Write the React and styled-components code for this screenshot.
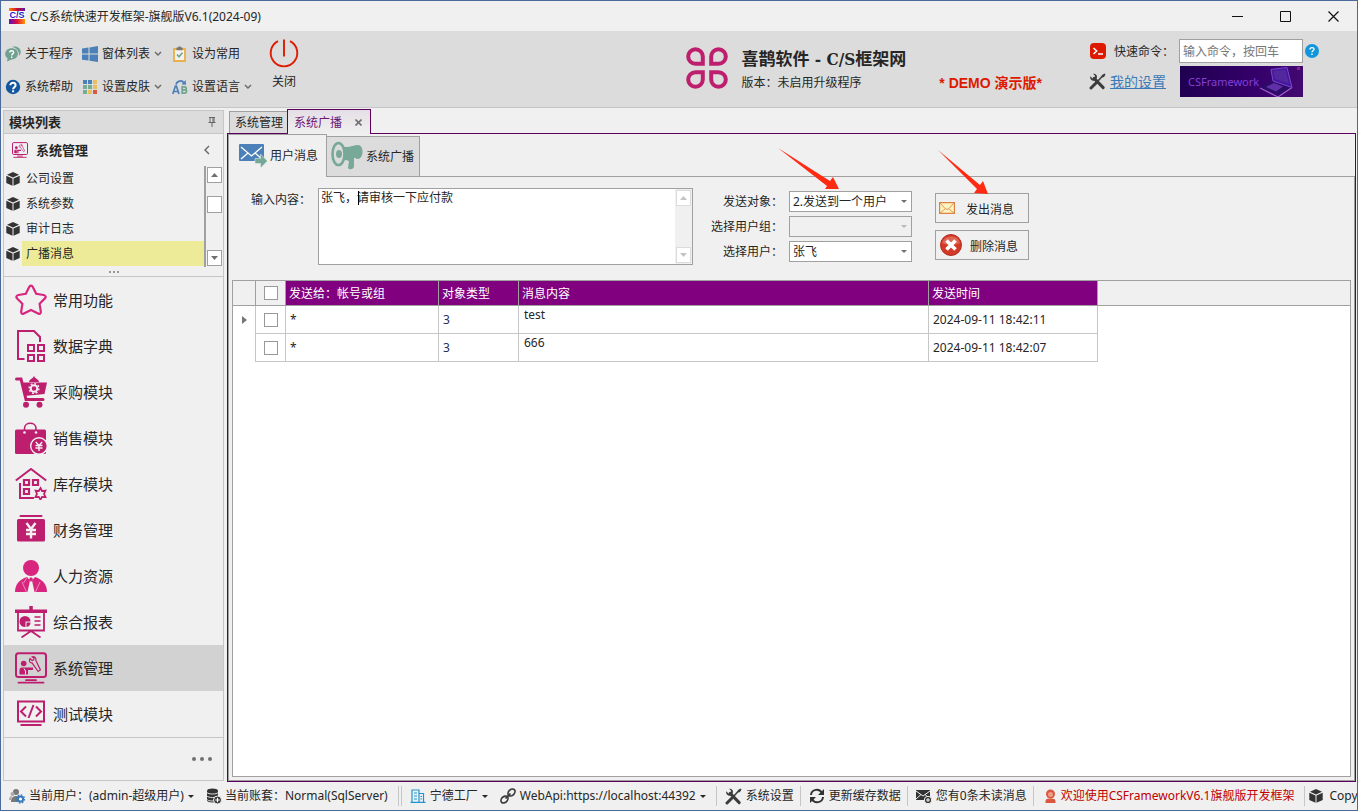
import React, { useState } from "react";
import styled, { createGlobalStyle, css } from "styled-components";

const ink = "#262626";
const pink = "#be1e6e";
const line = "#c6c6c6";
const edge = "#a0a0a0";
const purple = "#5c005c";
const uiFont = `"Noto Sans", "Noto Sans CJK SC", sans-serif`;

const GlobalStyle = createGlobalStyle`
  * { box-sizing: border-box; }
  body { margin: 0; background: #f0f0f0; color: ${ink}; font: 12px/16px ${uiFont}; }
  button, input, select, textarea { font: inherit; color: inherit; margin: 0; }
  button { padding: 0; border: 0; background: none; text-align: left; }
  svg { display: block; flex: none; }
`;

/* ---------- window frame ---------- */
const Window = styled.div`
  display: flex;
  flex-direction: column;
  min-height: 100vh;
  border: 1px solid #4a6a9c;
  background: #f0f0f0;
  overflow: hidden;
  white-space: nowrap;
`;
const TitleBar = styled.header`
  display: flex;
  align-items: center;
  height: 30px;
  padding-left: 8px;
  background: #f0f0f0;
`;
const TitleText = styled.h1`
  flex: 1;
  margin: 0 0 0 5px;
  padding-top: 2px;
  font-size: 12px;
  font-weight: 400;
`;
const WindowButton = styled.button`
  display: grid;
  place-items: center;
  width: 48px;
  height: 30px;
`;

/* ---------- toolbar ---------- */
const Toolbar = styled.div`
  display: flex;
  align-items: flex-start;
  height: 77px;
  padding: 6px 38px 0 4px;
  background: #dcdcdc;
  border-bottom: 1px solid ${line};
`;
const CommandGrid = styled.div`
  display: grid;
  grid-template-columns: 77px 90px 84px;
  grid-auto-rows: 33px;
`;
const Command = styled.button`
  display: flex;
  align-items: center;
  gap: 4px;
  height: 33px;
`;
const CloseCommand = styled.button`
  display: flex;
  flex-direction: column;
  align-items: center;
  gap: 5px;
  width: 56px;
`;
const Spacer = styled.div`
  flex: 1;
`;
const Brand = styled.div`
  display: flex;
  gap: 14px;
  padding-top: 10px;
`;
const BrandName = styled.div`
  font: bold 17px/24px "DejaVu Serif Condensed", "Noto Sans CJK SC", serif;
`;
const BrandVersion = styled.div`
  margin-top: 4px;
`;
const DemoMark = styled.strong`
  margin: 36px 47px 0 33px;
  color: #dd1a00;
  font: bold 14px/20px "Liberation Sans", "Noto Sans CJK SC", sans-serif;
`;
const QuickArea = styled.div`
  display: grid;
  grid-template-columns: 90px 124px 16px;
  grid-template-rows: 24px 31px;
  row-gap: 3px;
  padding-top: 2px;
  align-items: center;
`;
const QuickLabel = styled.label`
  display: flex;
  align-items: center;
  gap: 8px;
  padding-left: 1px;
`;
const QuickText = styled.span`
  padding-top: 2px;
`;
const SettingsCell = styled.div`
  display: flex;
  align-items: center;
  gap: 4px;
`;
const SettingsLink = styled.a`
  color: #3a7ab8;
  font-size: 14px;
  line-height: 20px;
`;
const QuickInput = styled.input`
  width: 100%;
  height: 24px;
  padding: 0 3px;
  border: 1px solid ${edge};
  background: #fff;
  &::placeholder { color: #777; opacity: 1; }
`;
const Banner = styled.div`
  display: flex;
  align-items: center;
  justify-content: space-between;
  height: 31px;
  margin-left: 1px;
  padding-left: 8px;
  overflow: hidden;
  background: linear-gradient(100deg, #1f0050, #35006a 60%, #430a70);
  color: #843fd8;
  font-size: 11px;
`;

/* ---------- sidebar ---------- */
const Body = styled.div`
  display: flex;
  flex: 1;
  padding-right: 1px;
`;
const Sidebar = styled.nav`
  display: flex;
  flex-direction: column;
  width: 221px;
  margin: 2px 3px 1px 2px;
  border: 1px solid ${line};
`;
const SidebarTitle = styled.div`
  display: flex;
  align-items: center;
  justify-content: space-between;
  height: 23px;
  padding: 0 7px 0 5px;
  border-bottom: 1px solid ${line};
  background: #dcdcdc;
  font-size: 13px;
  font-weight: 700;
`;
const GroupTitle = styled.div`
  display: flex;
  align-items: center;
  gap: 8px;
  height: 32px;
  padding: 0 13px 0 8px;
  font-size: 13px;
  font-weight: 700;
`;
const SubList = styled.div`
  display: flex;
  height: 101px;
`;
const SubItems = styled.div`
  flex: 1;
  border-right: 2px solid ${edge};
`;
const SubItem = styled.button`
  display: flex;
  align-items: center;
  gap: 2px;
  width: 100%;
  height: 25px;
  padding-left: 2px;
`;
const SubItemText = styled.span`
  flex: 1;
  padding: 1px 0 0 4px;
  line-height: 24px;
  background: ${(p) => (p.$on ? "#eeeb98" : "transparent")};
`;
const Scroller = styled.div`
  display: flex;
  flex-direction: column;
  justify-content: space-between;
  padding: 1px;
`;
const ScrollBox = styled.button`
  display: grid;
  place-items: center;
  width: 15px;
  height: 16px;
  border: 1px solid ${(p) => (p.$faint ? "#dcdcdc" : edge)};
  background: #fff;
  color: ${(p) => (p.$faint ? "#c4c4c4" : "#707070")};
`;
const ScrollThumb = styled.div`
  width: 15px;
  height: 17px;
  margin-bottom: 24px;
  border: 1px solid ${edge};
  background: #fff;
`;
const Grip = styled.div`
  display: grid;
  place-items: center;
  height: 10px;
  border-bottom: 1px solid ${line};
`;
const NavItem = styled.button`
  display: flex;
  align-items: center;
  gap: 6px;
  height: 46px;
  padding-left: 11px;
  background: ${(p) => (p.$on ? "#d2d2d2" : "transparent")};
  font-size: 15px;
  line-height: 20px;
`;
const NavText = styled.span`
  padding-bottom: 1px;
`;
const SidebarFoot = styled.div`
  display: flex;
  flex: 1;
  align-items: center;
  justify-content: flex-end;
  padding-right: 11px;
  border-top: 1px solid ${line};
`;

/* ---------- documents ---------- */
const Documents = styled.main`
  display: flex;
  flex: 1;
  flex-direction: column;
  min-width: 0;
`;
const DocTabs = styled.div`
  display: flex;
  align-items: flex-end;
  height: 25px;
  padding-left: 2px;
`;
const DocTab = styled.button`
  display: flex;
  align-items: center;
  height: 22px;
  padding: 1px 4px 0 5px;
  border: 1px solid ${edge};
  border-width: 1px 0 0 1px;
  background: #dcdcdc;
  ${(p) =>
    p.$on &&
    css`
      gap: 13px;
      position: relative;
      z-index: 1;
      height: 25px;
      margin-bottom: -1px;
      padding: 1px 8px 0 6px;
      border: 1px solid ${purple};
      border-bottom: 0;
      background: linear-gradient(#e4dfe6, #f0f0f0);
      color: #6d1573;
    `}
`;
const DocFrame = styled.section`
  display: flex;
  flex: 1;
  flex-direction: column;
  border: 1px solid ${purple};
`;
const PageTabs = styled.div`
  display: flex;
  height: 43px;
`;
const PageTab = styled.button`
  display: flex;
  align-items: center;
  gap: 3px;
  margin-top: 2px;
  padding: 0 5px 0 4px;
  border: 1px solid ${edge};
  border-left: 0;
  background: #dcdcdc;
  ${(p) =>
    p.$on &&
    css`
      margin-top: 0;
      padding: 0 8px 0 10px;
      border-left: 1px solid ${edge};
      border-bottom: 0;
      background: #f0f0f0;
    `}
`;
const PageTabsRest = styled.div`
  flex: 1;
  border-bottom: 1px solid ${edge};
`;
const Page = styled.div`
  display: flex;
  flex: 1;
  flex-direction: column;
  padding: 0 3px 3px;
  border: 1px solid ${edge};
  border-top: 0;
`;

/* ---------- message form ---------- */
const Form = styled.form`
  display: flex;
  align-items: flex-start;
  height: 103px;
  padding: 11px 0 0 19px;
`;
const MessageLabel = styled.label`
  width: 67px;
  padding-top: 4px;
`;
const MessageBox = styled.div`
  position: relative;
  display: flex;
  width: 375px;
  height: 77px;
  border: 1px solid ${edge};
  background: #fff;
`;
const MessageText = styled.textarea`
  flex: 1;
  padding: 1px 2px;
  border: 0;
  outline: 0;
  resize: none;
  overflow: hidden;
  background: transparent;
`;
const TextCaret = styled.i`
  position: absolute;
  top: 2px;
  left: 39px;
  width: 1px;
  height: 14px;
  background: #000;
`;
const BoxScroller = styled(Scroller)`
  background: #f0f0f0;
`;
const Targets = styled.div`
  position: relative;
  display: grid;
  grid-template-columns: 72px 123px;
  grid-auto-rows: 21px;
  gap: 4px 6px;
  align-items: center;
  margin: 3px 23px 0 18px;
`;
const TargetLabel = styled.label`
  text-align: right;
`;
const SelectBox = styled.div`
  display: grid;
  grid-template-columns: 1fr 15px;
  align-items: center;
  height: 21px;
  border: 1px solid ${edge};
  background: ${(p) => (p.$off ? "#f0f0f0" : "#fff")};
  color: ${(p) => (p.$off ? "#b8b8b8" : "#707070")};
`;
const Select = styled.select`
  grid-area: 1 / 1 / 2 / 3;
  height: 19px;
  padding: 0 15px 0 3px;
  border: 0;
  outline: 0;
  appearance: none;
  background: transparent;
  color: ${ink};
`;
const SelectArrow = styled.svg`
  grid-area: 1 / 2;
  justify-self: center;
  pointer-events: none;
`;
const Actions = styled.div`
  position: relative;
  display: grid;
  gap: 7px;
  margin-top: 5px;
`;
const Action = styled.button`
  display: flex;
  align-items: center;
  width: 94px;
  height: 30px;
  padding: 0 3px;
  border: 1px solid ${edge};
  background: #f0f0f0;
`;
const ActionText = styled.span`
  flex: 1;
  padding-top: 3px;
  text-align: center;
`;
const Pointer = styled.svg`
  position: absolute;
  left: ${(p) => p.$left}px;
  bottom: 100%;
  margin-bottom: ${(p) => p.$lift}px;
  pointer-events: none;
`;

/* ---------- data grid ---------- */
const GridBox = styled.div`
  flex: 1;
  border: 1px solid ${edge};
  background: #fff;
`;
const Table = styled.table`
  width: 100%;
  table-layout: fixed;
  border-collapse: separate;
  border-spacing: 0;
`;
const Head = styled.th`
  height: 25px;
  width: ${(p) => (p.$w ? p.$w + "px" : "auto")};
  padding: ${(p) => (p.$fill ? "2px 3px 0" : "0 4px")};
  border-bottom: 1px solid ${edge};
  border-right: ${(p) => (p.$w ? `1px solid ${edge}` : "0")};
  background: ${(p) => (p.$fill ? "#800080" : "#f0f0f0")};
  color: #fff;
  font-weight: 400;
  text-align: left;
`;
const Cell = styled.td`
  height: 28px;
  padding: ${(p) => (p.$top ? "1px 5px 0" : "0 4px")};
  border-right: 1px solid ${line};
  border-bottom: 1px solid ${line};
  color: ${(p) => (p.$code ? "#1d2f5c" : ink)};
  vertical-align: ${(p) => (p.$top ? "top" : "middle")};
`;
const MarkCell = styled(Cell)`
  border-bottom: 0;
  padding-left: 9px;
`;
const BlankCell = styled.td``;
const Tick = styled.input.attrs({ type: "checkbox" })`
  display: block;
  width: 14px;
  height: 14px;
  margin: 0 auto;
  border: 1px solid #999;
  appearance: none;
  background: #fff;
  &:checked { background: #800080; }
`;

/* ---------- status bar ---------- */
const StatusBar = styled.footer`
  display: flex;
  align-items: center;
  height: 28px;
  padding-left: 8px;
`;
const Status = styled.div`
  display: flex;
  flex: none;
  align-items: center;
  gap: ${(p) => p.$gap || 4}px;
  padding-right: ${(p) => p.$after || 6}px;
  color: ${(p) => p.$color || ink};
`;
const Divider = styled.i`
  flex: none;
  width: 1px;
  height: 20px;
  margin-right: ${(p) => p.$after || 8}px;
  background: ${line};
`;

/* ---------- small marks ---------- */
const Chevron = () => (
  <svg width="8" height="6" viewBox="0 0 8 6" fill="none" stroke="#666" strokeWidth="1.4">
    <path d="M1 1l3 3 3-3" />
  </svg>
);
const Triangle = ({ up, small }) => (
  <svg width={small ? 6 : 7} height={small ? 3 : 4} viewBox="0 0 7 4" preserveAspectRatio="none" fill="currentColor">
    <path d={up ? "M0 4L3.5 0 7 4z" : "M0 0h7L3.5 4z"} />
  </svg>
);
const Cube = ({ size = 14 }) => (
  <svg width={size} height={size} viewBox="0 0 14 14" fill="#333">
    <path d="M7 0L13 2.800 7 5.600 1 2.800z" />
    <path d="M.3 3.700L6.500 6.600v7.200L.3 10.900zM13.700 3.700L7.500 6.600v7.200l6.200-2.900z" />
  </svg>
);
const Tools = () => (
  <svg width="17" height="17" viewBox="0 0 17 17" fill="none" stroke="#3c3c3c">
    <path d="M5.2 5.4l9 9.2" strokeWidth="3" strokeLinecap="round" />
    <path d="M1.3 3.2l2.2 2.2 2-.6.6-2L4 .8c2-.6 4.2.8 4 3.2l-.4 1.6-2 2C3.500 8.200.4 6.300 1.300 3.200z" fill="#3c3c3c" stroke="none" />
    <path d="M8 9l-6 6" strokeWidth="3" strokeLinecap="round" />
    <path d="M8.500 8.500l5-5.500" strokeWidth="1.500" />
    <path d="M12.500 3.600l.6-1.600L15.500.5l1 1L15 4l-1.500.6z" fill="#3c3c3c" stroke="none" />
  </svg>
);
const AppIcon = () => (
  <svg width="16" height="16" viewBox="0 0 16 16">
    <defs>
      <linearGradient id="appMark" x1="0" x2="1">
        <stop offset="0" stopColor="#ff8a00" />
        <stop offset=".5" stopColor="#d20a30" />
        <stop offset="1" stopColor="#5a18b0" />
      </linearGradient>
      <linearGradient id="appMarkB" x1="0" x2="1">
        <stop offset="0" stopColor="#5a10c0" />
        <stop offset=".5" stopColor="#e0103a" />
        <stop offset="1" stopColor="#ff9a00" />
      </linearGradient>
    </defs>
    <rect width="16" height="16" fill="#fff" />
    <rect width="16" height="3" fill="url(#appMark)" />
    <rect y="11" width="16" height="5" fill="url(#appMarkB)" />
    <text x="8" y="10" textAnchor="middle" fontFamily="Liberation Sans" fontWeight="bold" fontSize="9" fill="#1a22c8">C/S</text>
  </svg>
);

const commandIcons = {
  about: (
    <>
      <path d="M7 .8c5-1.500 9 1.500 8.700 5.500-.1 1.500-.8 2.800-1.700 3.700C14.500 5 11.500 2.200 7 .8z" fill="#70a090" />
      <path d="M6.500 2.300c3.800 0 6.400 2.300 6.400 5.500s-2.700 5.600-6.300 5.600L2 15.500l.6-3.200C1 11.200.2 9.700.2 7.900c0-3.200 2.700-5.600 6.300-5.600z" fill="#70a090" />
      <path d="M4.700 6.500c0-2.400 3.900-2.400 3.900-.1 0 1.500-1.900 1.500-1.900 3M6.700 10.500V12" stroke="#fff" strokeWidth="1.400" fill="none" />
    </>
  ),
  help: (
    <>
      <circle cx="8" cy="8" r="7.200" fill="#14569e" />
      <path d="M5.300 6.300c0-3.300 5.300-3.200 5.300 0 0 2-2.500 1.900-2.500 4M8.100 11.200v2" stroke="#fff" strokeWidth="2" fill="none" />
    </>
  ),
  windows: <path d="M0 2.500l6.500-1v6H0zM7.500 1.400L16 0v7.500H7.500zM0 8.500h6.500v6L0 13.700zM7.500 8.500H16V16l-8.500-1.300z" fill="#4c80b8" />,
  skin: (
    <>
      <path d="M1 1h4v4H1zM6 1h4v4H6z" fill="#4c80b8" /><path d="M11 1h4v4h-4z" fill="#ecbd5c" />
      <path d="M1 6h4v4H1zM6 6h4v4H6z" fill="#78ac94" /><path d="M11 6h4v4h-4z" fill="#ecbd5c" />
      <path d="M1 11h4v4H1z" fill="#78ac94" /><path d="M6 11h4v4H6z" fill="#ecbd5c" /><path d="M11 11h4v4h-4z" fill="#d75a42" />
    </>
  ),
  favorite: (
    <>
      <path d="M2 3h11v12H2z" fill="#f2f2f2" stroke="#ecae45" strokeWidth="1.800" />
      <path d="M4.500 1.500H6L6.500.4h2l.5 1.100h1.500v2.700h-6z" fill="#777" />
      <path d="M5 8.500l2 2.200 3.400-4" stroke="#70a48e" strokeWidth="1.600" fill="none" />
    </>
  ),
  language: (
    <>
      <path d="M.8 15L3.400 7h1L7 15M1.800 12.500h4.200" stroke="#4c80b8" strokeWidth="1.700" fill="none" />
      <path d="M10.200 7.800v6.400h2.600c2.400 0 2.400-3.200.2-3.300 1.800-.2 1.700-3.100-.4-3.100zm0 3.100H13" stroke="#70a48e" strokeWidth="1.700" fill="none" />
      <path d="M4 5.500C5 1.500 10 .8 12 4" stroke="#4c80b8" strokeWidth="1.700" fill="none" /><path d="M9.500 5.500l4.500.3L13.700 1z" fill="#4c80b8" />
    </>
  ),
};
const CommandIcon = ({ name }) => <svg width="16" height="16" viewBox="0 0 16 16">{commandIcons[name]}</svg>;

const outline = { fill: "none", stroke: pink, strokeWidth: 2 };
const monitor = (
  <>
    <rect x="1" y="1.200" width="30" height="23.800" rx="2.500" {...outline} />
    <path d="M11 28.200h10" {...outline} strokeWidth="1.800" strokeLinecap="round" />
    <path d="M3.500 30.700h25" {...outline} strokeWidth="1.800" strokeLinecap="round" />
    <circle cx="8.700" cy="11.500" r="2.800" fill={pink} />
    <path d="M4.500 22.500v-4.500c0-2 1.500-2.500 3-2.500h10.500v2.500h-5v4.500z" fill={pink} />
    <path d="M9 16.500l1.500 2.500v3.500" stroke="#f0f0f0" fill="none" />
    <path d="M15 6.500l2.200 2 1.500-.6.300-1.700-1.800-1.500c2.300-.7 4.300 1.300 3.600 3.600l4.600 9.600-2.200 1.600-6.200-8.700c-1.800.6-3.600-1.800-2-4.300z" fill="none" stroke={pink} strokeWidth="1.200" />
  </>
);
const moduleIcons = {
  star: <path d="M16 1.600c.8 0 1.400.7 1.800 1.500l3.400 6.700 7.400 1.200c2 .3 2.700 2 1.300 3.400l-5.300 5.400 1.200 7.700c.3 2-1 2.900-2.700 2L16 26l-7.100 3.500c-1.700.9-3 0-2.700-2l1.200-7.700-5.300-5.400C.700 13 1.400 11.300 3.400 11l7.400-1.200 3.400-6.700c.4-.8 1-1.500 1.800-1.500z" fill="none" stroke="#d8267f" strokeWidth="2.200" />,
  dictionary: (
    <g {...outline}>
      <path d="M9.500 29H3V1h16l6 6v5" />
      <path d="M13 15h6v6h-6zM23 15h6v6h-6zM13 25h6v6h-6zM23 25h6v6h-6z" />
    </g>
  ),
  cart: (
    <>
      <path d="M1.500 3h4.500l5 20.500h17" fill="none" stroke={pink} strokeWidth="3" strokeLinecap="round" />
      <path d="M14 6c1-4 3-2 5-6 2 4 4 2 5 6zM7.500 6.500H32L29.500 18 9.500 20z" fill={pink} />
      <circle cx="19" cy="12.500" r="3.300" fill="none" stroke="#f0f0f0" strokeWidth="2" />
      <circle cx="19" cy="12.500" r="4.900" fill="none" stroke="#f0f0f0" strokeWidth="1.400" strokeDasharray="1.900 1.900" />
      <circle cx="11" cy="28.800" r="3" fill={pink} /><circle cx="24.500" cy="28.800" r="3" fill={pink} />
    </>
  ),
  bag: (
    <>
      <path d="M9.500 10V6.500c0-7 11.500-7 11.500 0V10" fill="none" stroke={pink} strokeWidth="1.600" />
      <rect y="7.500" width="31" height="24.500" rx="1.500" fill={pink} />
      <circle cx="9.500" cy="10.500" r="1.300" fill="#f0f0f0" /><circle cx="21" cy="10.500" r="1.300" fill="#f0f0f0" />
      <circle cx="24" cy="24" r="8.300" fill={pink} stroke="#f0f0f0" strokeWidth="1.400" />
      <path d="M20.800 20l3.200 3.500 3.200-3.500M24 23.500V29M20.500 23.500h7M20.500 26h7" fill="none" stroke="#f0f0f0" strokeWidth="1.400" />
    </>
  ),
  house: (
    <g {...outline}>
      <path d="M.8 12.500L16 1l15.200 11.500M5 15v15h14" />
      <path d="M9 12h5v5H9zM18 12h5v5h-5zM9 21h5v5H9z" strokeWidth="2.200" />
      <path d="M25.500 20l1.500 3 3.500-.5-1.500 3.500 1.500 3-3.500-.2-1.500 3-1.700-3-3.300.2 1.500-3-1.500-3.500 3.300.5z" strokeWidth="1.700" />
    </g>
  ),
  finance: (
    <>
      <path d="M5.500 2h21" stroke={pink} strokeWidth="2" strokeLinecap="round" />
      <rect x="2" y="5" width="28" height="22.500" rx="1.500" fill={pink} />
      <path d="M11.500 9l4.500 6 4.500-6M16 15v9.500M11 16h10M11 20h10" fill="none" stroke="#f0f0f0" strokeWidth="2.400" />
    </>
  ),
  people: (
    <g fill="#d8267f">
      <circle cx="16" cy="8" r="8" />
      <path d="M0 32c0-7 4-12.500 12-15l3 3.500L12.500 32zM32 32c0-7-4-12.500-12-15l-3 3.500L19.500 32z" />
      <path d="M15 17.500h2l1 2-2 2.500-2-2.500z" />
      <path d="M7 22l4.500 10M25 22l-4.500 10M12 17.500L8.500 23" stroke="#f0a5c8" strokeWidth=".8" />
    </g>
  ),
  report: (
    <>
      <path d="M0 3.500h32V7H0zM14.300 0h3.500v5h-3.500z" fill={pink} />
      <path d="M3 7v17.500h26V7M16 25l-9.500 6.500M16 25l9.500 6.500" {...outline} strokeWidth="1.800" />
      <circle cx="10" cy="15.500" r="5.500" fill={pink} />
      <path d="M10.500 15.500h6v6h-6z" fill="#f0f0f0" /><path d="M11.500 16.500h4c0 2.500-1.500 4-4 4.500z" fill={pink} />
      <path d="M19.500 11h6M19.500 15h6M19.500 19h6" stroke={pink} strokeWidth="1.700" />
    </>
  ),
  system: monitor,
  test: (
    <>
      <path d="M3 3.500h26v20H3zM5.500 27h21" {...outline} />
      <path d="M11 8.500l-5 5 5 5M21 8.500l5 5-5 5M18.500 7l-5 13" {...outline} />
    </>
  ),
};
const ModuleIcon = ({ name, size = 32 }) => <svg width={size} height={size} viewBox="0 0 32 32">{moduleIcons[name]}</svg>;

const statusIcons = {
  user: (
    <>
      <circle cx="7" cy="4" r="3" fill="#777" /><circle cx="3.500" cy="6" r="2" fill="#aaa" />
      <path d="M2 14c0-4 2-6 5-6s4 1 4 2l-3 4z" fill="#777" /><path d="M0 12c0-2 1-4 3-4L2 12z" fill="#aaa" />
      <circle cx="11.500" cy="11" r="2.600" fill="#fff" stroke="#3878b8" strokeWidth="2" />
      <circle cx="11.500" cy="11" r="4" fill="none" stroke="#3878b8" strokeWidth="1.400" strokeDasharray="1.600 1.500" />
    </>
  ),
  database: (
    <>
      <path d="M1 2.500C1-.2 12-.2 12 2.500v10c0 2.500-11 2.500-11 0z" fill="#333" />
      <path d="M1 4.500c1 2 10 2 11 0M1 8c1 2 10 2 11 0M1 11.400c1 2 8 2 10 .6" stroke="#f0f0f0" fill="none" strokeWidth=".9" />
      <circle cx="11.500" cy="12" r="4" fill="#333" stroke="#f0f0f0" />
      <path d="M11.500 9.700v4.600M9.200 12h4.600" stroke="#fff" strokeWidth="1.200" />
    </>
  ),
  factory: (
    <g fill="none" stroke="#1e96d2" strokeWidth="1.200">
      <path d="M2 14V2h7v12M9 5.500h4.500V14M.5 14.300h15" />
      <path d="M4 5h3M4 8h3M4 11h3M10.500 8.500h1.500M10.500 11h1.500" />
    </g>
  ),
  chain: (
    <g fill="none" stroke="#3a3a3a" strokeWidth="1.700">
      <ellipse cx="11.500" cy="4.500" rx="4" ry="2.900" transform="rotate(-45 11.500 4.500)" />
      <ellipse cx="4.500" cy="11.500" rx="4" ry="2.900" transform="rotate(-45 4.500 11.500)" />
      <path d="M5.500 10.500l5-5" />
    </g>
  ),
  refresh: (
    <>
      <path d="M2 7c.5-6 8.500-7 11-2M14 9c-.5 6-8.500 7-11 2" fill="none" stroke="#333" strokeWidth="2" />
      <path d="M15 1v6H9zM1 15V9h6z" fill="#333" />
    </>
  ),
  mail: (
    <>
      <path d="M0 2h14v10H0z" fill="#333" />
      <path d="M0 3l7 5 7-5M0 11l5-4.500M14 11L9 6.500" stroke="#f0f0f0" fill="none" />
      <circle cx="12" cy="12" r="3.700" fill="#333" stroke="#f0f0f0" /><path d="M12 10v4M10 12h4" stroke="#fff" />
    </>
  ),
  person: (
    <>
      <circle cx="6.500" cy="6" r="4.500" fill="#d9593f" /><circle cx="6.500" cy="6.500" r="2.500" fill="#ee9c86" />
      <path d="M1.500 15v-2c0-1.700 1.500-2.500 5-2.500s5 .8 5 2.500v2z" fill="#d9593f" />
    </>
  ),
};
const StatusIcon = ({ name }) => <svg width={name === "person" ? 13 : 16} height="16" viewBox={name === "person" ? "0 0 13 16" : "0 0 16 16"}>{statusIcons[name]}</svg>;

const commands = [
  ["about", "关于程序", false], ["windows", "窗体列表", true], ["favorite", "设为常用", false],
  ["help", "系统帮助", false], ["skin", "设置皮肤", true], ["language", "设置语言", true],
];
const subItems = ["公司设置", "系统参数", "审计日志", "广播消息"];
const modules = [
  ["star", "常用功能"], ["dictionary", "数据字典"], ["cart", "采购模块"], ["bag", "销售模块"], ["house", "库存模块"],
  ["finance", "财务管理"], ["people", "人力资源"], ["report", "综合报表"], ["system", "系统管理"], ["test", "测试模块"],
];
const rows = [
  { to: "*", type: "3", text: "test", time: "2024-09-11 18:42:11" },
  { to: "*", type: "3", text: "666", time: "2024-09-11 18:42:07" },
];

function Dropdown({ id, label, options, disabled }) {
  return (
    <>
      <TargetLabel htmlFor={id}>{label}</TargetLabel>
      <SelectBox $off={disabled}>
        <Select id={id} disabled={disabled}>
          {options.map((o) => <option key={o}>{o}</option>)}
        </Select>
        <SelectArrow width="6" height="3" viewBox="0 0 6 3" fill="currentColor"><path d="M0 0h6L3 3z" /></SelectArrow>
      </SelectBox>
    </>
  );
}

export default function App() {
  const [active, setActive] = useState("system");
  const [sub, setSub] = useState("广播消息");
  return (
    <Window>
      <GlobalStyle />
      <TitleBar>
        <AppIcon />
        <TitleText>C/S系统快速开发框架-旗舰版V6.1(2024-09)</TitleText>
        <WindowButton aria-label="最小化"><svg width="11" height="11" viewBox="0 0 11 11" stroke="#111"><path d="M0 5.500h11" /></svg></WindowButton>
        <WindowButton aria-label="最大化"><svg width="11" height="11" viewBox="0 0 11 11" fill="none" stroke="#111"><path d="M.5.5h10v10H.5z" /></svg></WindowButton>
        <WindowButton aria-label="关闭窗口"><svg width="11" height="11" viewBox="0 0 11 11" stroke="#111" strokeWidth="1.200"><path d="M.5.5l10 10M10.500.5l-10 10" /></svg></WindowButton>
      </TitleBar>

      <Toolbar>
        <CommandGrid>
          {commands.map(([icon, label, more]) => (
            <Command key={icon}><CommandIcon name={icon} />{label}{more && <Chevron />}</Command>
          ))}
        </CommandGrid>
        <CloseCommand>
          <svg width="32" height="32" viewBox="0 0 32 32" fill="none" stroke="#dd1c00" strokeWidth="1.900">
            <path d="M10 4.200a13.300 13.300 0 1 0 12 0M16 2.500v17" />
          </svg>
          关闭
        </CloseCommand>
        <Spacer />
        <Brand>
          <svg width="42" height="42" viewBox="0 0 42 42" fill="none" stroke="#be1e6e" strokeWidth="4">
            {[0, 90, 180, 270].map((r) => (
              <path key={r} transform={`rotate(${r} 21 21)`} d="M16.800 16.800H9.500a7.300 7.300 0 1 1 7.300-7.300z" />
            ))}
          </svg>
          <div>
            <BrandName>喜鹊软件 - C/S框架网</BrandName>
            <BrandVersion>版本：未启用升级程序</BrandVersion>
          </div>
        </Brand>
        <DemoMark>* DEMO 演示版*</DemoMark>
        <QuickArea>
          <QuickLabel htmlFor="quick">
            <svg width="16" height="16" viewBox="0 0 16 16" fill="none">
              <rect width="16" height="16" rx="4" fill="#dd1a00" />
              <path d="M3.500 5l3.200 3-3.200 3M8 11h5" stroke="#fff" strokeWidth="1.500" />
            </svg>
            <QuickText>快速命令：</QuickText>
          </QuickLabel>
          <QuickInput id="quick" placeholder="输入命令，按回车" />
          <svg width="16" height="16" viewBox="0 0 16 16" fill="none">
            <circle cx="9" cy="8" r="7" fill="#1296db" />
            <path d="M7 6.500c0-2.500 4-2.500 4-.2 0 1.600-2 1.400-2 3M9 10.500V12" stroke="#fff" strokeWidth="1.400" />
          </svg>
          <SettingsCell><Tools /><SettingsLink href="#settings">我的设置</SettingsLink></SettingsCell>
          <Banner>
            CSFramework
            <svg width="44" height="31" viewBox="0 0 44 31">
              <path d="M1 22l11-7 21 6.500-12 8.500z" fill="#2c0c66" />
              <path d="M1 22l18 9 14-9.500" fill="none" stroke="#a45ad0" strokeWidth="1.200" />
              <path d="M12 3.500l16-2 5 20L14 15z" fill="#43189a" stroke="#7d44d8" />
              <path d="M14 5l12.500-1.600 3.500 14L16 13z" fill="#53289e" />
              <path d="M7 21l8-4 9 3.500-7 5z" fill="#6030a8" />
              <path d="M38 1h3v3h-3z" fill="#8a2090" />
            </svg>
          </Banner>
        </QuickArea>
      </Toolbar>

      <Body>
        <Sidebar>
          <SidebarTitle>
            模块列表
            <svg width="8" height="10" viewBox="0 0 8 10" fill="none" stroke="#666"><path d="M1 .5h6M2 .5v5M6 .5v5M5 .5v5M.5 5.500h7M4 5.500V10" /></svg>
          </SidebarTitle>
          <GroupTitle>
            <ModuleIcon name="system" size={16} />
            系统管理
            <Spacer />
            <svg width="6" height="10" viewBox="0 0 6 10" fill="none" stroke="#666" strokeWidth="1.400"><path d="M5 1L1 5l4 4" /></svg>
          </GroupTitle>
          <SubList>
            <SubItems>
              {subItems.map((s) => (
                <SubItem key={s} onClick={() => setSub(s)}><Cube /><SubItemText $on={s === sub}>{s}</SubItemText></SubItem>
              ))}
            </SubItems>
            <Scroller>
              <ScrollBox aria-label="向上"><Triangle up /></ScrollBox>
              <ScrollThumb />
              <ScrollBox aria-label="向下"><Triangle /></ScrollBox>
            </Scroller>
          </SubList>
          <Grip><svg width="10" height="2" viewBox="0 0 10 2" fill="#999"><path d="M0 0h2v2H0zM4 0h2v2H4zM8 0h2v2H8z" /></svg></Grip>
          {modules.map(([icon, label]) => (
            <NavItem key={icon} $on={icon === active} onClick={() => setActive(icon)}>
              <ModuleIcon name={icon} /><NavText>{label}</NavText>
            </NavItem>
          ))}
          <SidebarFoot>
            <svg width="20" height="4" viewBox="0 0 20 4" fill="#707070"><circle cx="2" cy="2" r="2" /><circle cx="10" cy="2" r="2" /><circle cx="18" cy="2" r="2" /></svg>
          </SidebarFoot>
        </Sidebar>

        <Documents>
          <DocTabs>
            <DocTab>系统管理</DocTab>
            <DocTab $on>
              系统广播
              <svg width="7" height="7" viewBox="0 0 7 7" stroke="#707070" strokeWidth="1.600"><path d="M.5.500l6 6M6.500.500l-6 6" /></svg>
            </DocTab>
          </DocTabs>
          <DocFrame>
            <PageTabs>
              <PageTab $on>
                <svg width="28" height="26" viewBox="0 0 28 26" fill="none">
                  <rect y="1" width="25" height="17" rx="1" fill="#4c80b8" />
                  <path d="M2 4l10.500 9L23 4M2 16l7-6M23 16l-7-6" stroke="#fff" strokeWidth="1.300" />
                  <path d="M16 15.500h5.500v-4.500l7 7-7 7v-4.500H16z" fill="#75a896" stroke="#f0f0f0" strokeWidth=".5" />
                </svg>
                用户消息
              </PageTab>
              <PageTab>
                <svg width="32" height="32" viewBox="0 0 32 32" fill="none">
                  <path d="M10 5c7 3 12-1 17-1 6 0 6 13 0 14-2-.5-3-1-4-1v8c0 4-5 4-6 2l1-7-3-1c-4 0-4 3-8 4z" fill="#78a898" />
                  <ellipse cx="7.500" cy="13" rx="6" ry="11" fill="#dcdcdc" stroke="#78a898" strokeWidth="2.600" />
                  <ellipse cx="8" cy="13" rx="3" ry="4" fill="#78a898" />
                </svg>
                系统广播
              </PageTab>
              <PageTabsRest />
            </PageTabs>
            <Page>
              <Form onSubmit={(e) => e.preventDefault()}>
                <MessageLabel htmlFor="message">输入内容：</MessageLabel>
                <MessageBox>
                  <MessageText id="message" defaultValue="张飞，请审核一下应付款" />
                  <TextCaret />
                  <BoxScroller>
                    <ScrollBox type="button" $faint disabled aria-label="向上滚动"><Triangle up /></ScrollBox>
                    <ScrollBox type="button" $faint disabled aria-label="向下滚动"><Triangle /></ScrollBox>
                  </BoxScroller>
                </MessageBox>
                <Targets>
                  <Dropdown id="target" label="发送对象：" options={["2.发送到一个用户"]} />
                  <Dropdown id="group" label="选择用户组：" options={[""]} disabled />
                  <Dropdown id="user" label="选择用户：" options={["张飞"]} />
                  <Pointer $left={66} $lift={1} width="63" height="43" viewBox="0 0 63 43" fill="#ff2a12">
                    <path d="M1 1l52 33 3-4 6 12H48l2-3z" />
                  </Pointer>
                </Targets>
                <Actions>
                  <Action>
                    <svg width="16" height="12" viewBox="0 0 16 12" fill="none">
                      <path d="M.6.600h14.800v10.800H.6z" fill="#fff3c0" stroke="#dc8344" strokeWidth="1.200" />
                      <path d="M1 1l5 5.500c1 1 3 1 4 0L15 1M1 11l5-4M15 11l-5-4" stroke="#e0975a" />
                    </svg>
                    <ActionText>发出消息</ActionText>
                  </Action>
                  <Action>
                    <svg width="24" height="22" viewBox="0 0 24 22" fill="none">
                      <circle cx="12" cy="11" r="10.500" fill="#d23a28" stroke="#b82a20" />
                      <path d="M3 9a9.500 9.500 0 0 1 18 0c-5 2.500-13 2.500-18 0z" fill="#df6654" />
                      <path d="M7.500 6.500l9 9M16.500 6.500l-9 9" stroke="#fff" strokeWidth="3.600" />
                    </svg>
                    <ActionText>删除消息</ActionText>
                  </Action>
                  <Pointer $left={2} $lift={-2} width="51" height="46" viewBox="0 0 51 46" fill="#ff2a12">
                    <path d="M1 1l42 35 3-4 5 13-14-1 3-4z" />
                  </Pointer>
                </Actions>
              </Form>
              <GridBox>
                <Table>
                  <thead>
                    <tr>
                      <Head $w={23} />
                      <Head $w={30}><Tick aria-label="全选" /></Head>
                      <Head $w={153} $fill>发送给：帐号或组</Head>
                      <Head $w={80} $fill>对象类型</Head>
                      <Head $w={410} $fill>消息内容</Head>
                      <Head $w={169} $fill>发送时间</Head>
                      <Head />
                    </tr>
                  </thead>
                  <tbody>
                    {rows.map((r, i) => (
                      <tr key={r.time}>
                        <MarkCell>{i === 0 && <svg width="5" height="8" viewBox="0 0 5 8" fill="#777"><path d="M0 0l5 4-5 4z" /></svg>}</MarkCell>
                        <Cell><Tick aria-label={`选择 ${r.text}`} /></Cell>
                        <Cell>{r.to}</Cell>
                        <Cell $code>{r.type}</Cell>
                        <Cell $top>{r.text}</Cell>
                        <Cell>{r.time}</Cell>
                        <BlankCell />
                      </tr>
                    ))}
                  </tbody>
                </Table>
              </GridBox>
            </Page>
          </DocFrame>
        </Documents>
      </Body>

      <StatusBar>
        <Status $after={12}><StatusIcon name="user" />当前用户：(admin-超级用户)<Triangle small /></Status>
        <Status $after={10} $gap={3}><StatusIcon name="database" />当前账套：Normal(SqlServer)</Status>
        <Divider $after={2} /><Divider />
        <Status $after={12}><StatusIcon name="factory" />宁德工厂<Triangle small /></Status>
        <Status $after={10}><StatusIcon name="chain" />WebApi:https://localhost:44392<Triangle small /></Status>
        <Divider />
        <Status><Tools />系统设置</Status>
        <Divider />
        <Status><StatusIcon name="refresh" />更新缓存数据</Status>
        <Divider />
        <Status><StatusIcon name="mail" />您有0条未读消息</Status>
        <Divider $after={10} />
        <Status $after={10} $color="#c00000"><StatusIcon name="person" />欢迎使用CSFrameworkV6.1旗舰版开发框架</Status>
        <Divider $after={4} />
        <Status $gap={6}><Cube />Copy</Status>
      </StatusBar>
    </Window>
  );
}
